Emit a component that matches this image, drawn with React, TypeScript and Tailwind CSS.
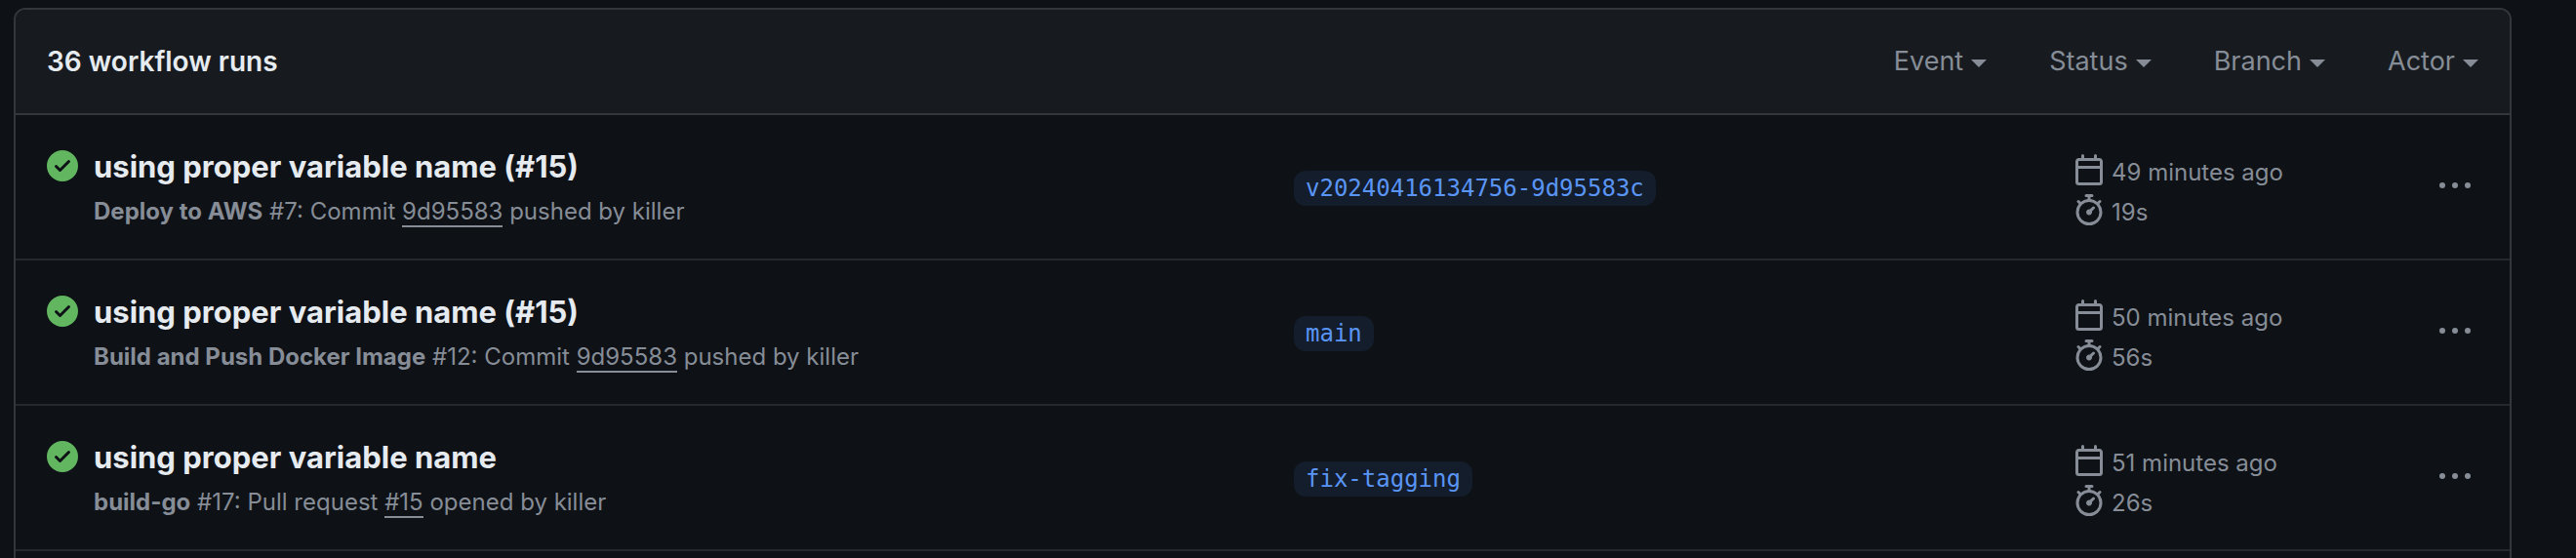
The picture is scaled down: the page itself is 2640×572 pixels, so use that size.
import type { ReactNode } from "react";

type Run = {
  id: string;
  title: string;
  workflow: string;
  before: string;
  reference: string;
  after: string;
  branch: string;
  age: string;
  duration: string;
};

const runs: Run[] = [
  {
    id: "deploy-7",
    title: "using proper variable name (#15)",
    workflow: "Deploy to AWS",
    before: "#7: Commit",
    reference: "9d95583",
    after: "pushed by killer",
    branch: "v20240416134756-9d95583c",
    age: "49 minutes ago",
    duration: "19s",
  },
  {
    id: "docker-12",
    title: "using proper variable name (#15)",
    workflow: "Build and Push Docker Image",
    before: "#12: Commit",
    reference: "9d95583",
    after: "pushed by killer",
    branch: "main",
    age: "50 minutes ago",
    duration: "56s",
  },
  {
    id: "build-17",
    title: "using proper variable name",
    workflow: "build-go",
    before: "#17: Pull request",
    reference: "#15",
    after: "opened by killer",
    branch: "fix-tagging",
    age: "51 minutes ago",
    duration: "26s",
  },
];

const filters = ["Event", "Status", "Branch", "Actor"];

function Icon({ className = "", children }: { className?: string; children: ReactNode }) {
  return (
    <svg viewBox="0 0 16 16" fill="currentColor" aria-hidden="true" className={`size-8 shrink-0 ${className}`}>
      {children}
    </svg>
  );
}

function SuccessIcon() {
  return (
    <Icon className="text-[#62b65f]">
      <path d="M8 16A8 8 0 1 1 8 0a8 8 0 0 1 0 16Zm3.78-9.72a.751.751 0 0 0-.018-1.042.751.751 0 0 0-1.042-.018L6.75 9.19 5.28 7.72a.751.751 0 0 0-1.042.018.751.751 0 0 0-.018 1.042l2 2a.75.75 0 0 0 1.06 0Z" />
    </Icon>
  );
}

function CalendarIcon() {
  return (
    <Icon>
      <path d="M4.75 0a.75.75 0 0 1 .75.75V2h5V.75a.75.75 0 0 1 1.5 0V2h1.25c.966 0 1.75.784 1.75 1.75v10.5A1.75 1.75 0 0 1 13.25 16H2.75A1.75 1.75 0 0 1 1 14.25V3.75C1 2.784 1.784 2 2.75 2H4V.75A.75.75 0 0 1 4.75 0ZM2.5 7.5v6.75c0 .138.112.25.25.25h10.5a.25.25 0 0 0 .25-.25V7.5Zm10.75-4H2.75a.25.25 0 0 0-.25.25V6h11V3.75a.25.25 0 0 0-.25-.25Z" />
    </Icon>
  );
}

function StopwatchIcon() {
  return (
    <Icon>
      <path d="M5.75.75A.75.75 0 0 1 6.5 0h3a.75.75 0 0 1 0 1.5h-.75v1l-.001.041a6.724 6.724 0 0 1 3.464 1.435l.007-.006.75-.75a.749.749 0 0 1 1.275.326.749.749 0 0 1-.215.734l-.75.75-.006.007a6.75 6.75 0 1 1-10.548 0L2.72 5.03l-.75-.75a.751.751 0 0 1 .018-1.042.751.751 0 0 1 1.042-.018l.75.75.007.006A6.72 6.72 0 0 1 7.25 2.541V1.5H6.5a.75.75 0 0 1-.75-.75ZM8 14.5a5.25 5.25 0 1 0-.001-10.501A5.25 5.25 0 0 0 8 14.5Zm.389-6.7 1.33-1.33a.75.75 0 1 1 1.061 1.06L9.45 8.861A1.503 1.503 0 0 1 8 10.75a1.499 1.499 0 1 1 .389-2.95Z" />
    </Icon>
  );
}

function KebabIcon() {
  return (
    <Icon>
      <circle cx="1.5" cy="8" r="1.5" />
      <circle cx="8" cy="8" r="1.5" />
      <circle cx="14.5" cy="8" r="1.5" />
    </Icon>
  );
}

function RunRow({ run }: { run: Run }) {
  return (
    <li className="grid grid-cols-[1278fr_799fr_367fr_48px] items-start border-b-2 border-[#25292e] px-8 pt-9 pb-[30px]">
      <div className="flex gap-4">
        <SuccessIcon />
        <div>
          <h3 className="text-[31px] leading-[34px] font-bold text-[#e6ebf0]">
            <a href={`#${run.id}`}>{run.title}</a>
          </h3>
          <p className="mt-[11px] text-2xl leading-9">
            <span className="font-bold">{run.workflow}</span> {run.before}{" "}
            <a href={`#${run.id}-source`} className="border-b-2 border-[#868d96]">
              {run.reference}
            </a>{" "}
            {run.after}
          </p>
        </div>
      </div>
      <div className="flex pt-[21px]">
        <a
          href={`#${run.id}-branch`}
          className="rounded-xl bg-[#141d2b] px-3 font-['DejaVu_Sans_Mono',monospace] text-2xl leading-9 text-[#5a95f5]"
        >
          {run.branch}
        </a>
      </div>
      <div className="flex flex-col gap-[6px] pt-1 text-2xl leading-8">
        <div className="flex gap-[7px]">
          <CalendarIcon />
          <span className="pt-[3px]">{run.age}</span>
        </div>
        <div className="flex gap-[7px]">
          <StopwatchIcon />
          <span className="pt-[3px]">{run.duration}</span>
        </div>
      </div>
      <button type="button" aria-label="Show options" className="flex justify-center pt-5">
        <KebabIcon />
      </button>
    </li>
  );
}

export default function App() {
  return (
    <main className="h-screen overflow-hidden bg-[#0e1116] pt-2 pr-[66px] pl-[14px] font-[Inter,sans-serif] text-[#868d96]">
      <section className="min-h-full rounded-t-xl border-2 border-b-0 border-[#33373c]">
        <header className="flex items-center justify-between rounded-t-[10px] border-b-2 border-[#33373c] bg-[#171b20] px-8 py-8 text-[28px] leading-[42px]">
          <h2 className="font-semibold text-[#e6ebf0]">36 workflow runs</h2>
          <div className="flex gap-16 text-[27px]">
            {filters.map((name) => (
              <button key={name} type="button" aria-haspopup="menu" className="flex items-center gap-2">
                {name}
                <svg viewBox="0 0 16 8" fill="currentColor" aria-hidden="true" className="mt-1 h-2 w-4">
                  <path d="M0 0h16L8 8z" />
                </svg>
              </button>
            ))}
          </div>
        </header>
        <ul>
          {runs.map((run) => (
            <RunRow key={run.id} run={run} />
          ))}
        </ul>
      </section>
    </main>
  );
}
